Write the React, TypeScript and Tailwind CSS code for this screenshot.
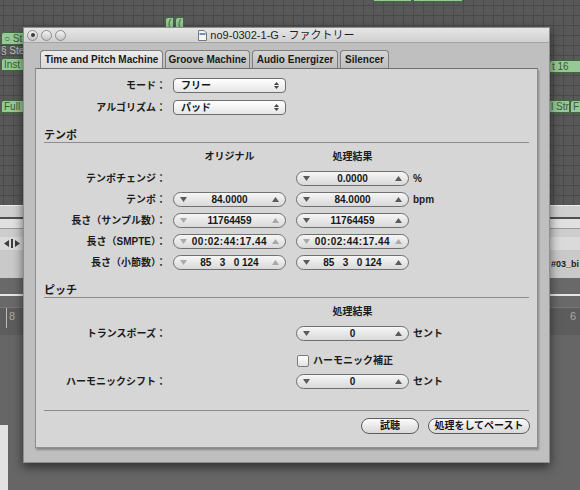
// App.tsx
// Time and Pitch Machine dialog (Logic "Factory" window) over the arrange area
import React from 'react'

const font = "font-['Liberation_Sans','Noto_Sans_CJK_JP',sans-serif]"

function Tri({ up, color }: { up?: boolean; color: string }) {
  return (
    <svg width="7" height="5" viewBox="0 0 7 5" className="shrink-0">
      <path d={up ? 'M0 5h7L3.5 0z' : 'M0 0h7L3.5 5z'} fill={color} />
    </svg>
  )
}

function Stepper({ value, dim, wide }: { value: string; dim?: boolean; wide?: boolean }) {
  const c = dim ? '#a9a9a9' : '#5a5a5a'
  return (
    <div className="w-[113px] h-[15px] shrink-0 rounded-full border border-[#707070] bg-linear-to-b from-[#f6f6f6] to-[#d9d9d9] flex items-center px-[6px]">
      <Tri color={c} />
      <span
        className={
          'flex-1 text-center text-[10px] font-bold leading-none text-[#161616] whitespace-pre ' +
          (wide ? 'tracking-[0.5px]' : '')
        }
      >
        {value}
      </span>
      <Tri up color={c} />
    </div>
  )
}

function Popup({ value }: { value: string }) {
  return (
    <div className="w-[113px] h-[15px] shrink-0 rounded-[4px] border border-[#6e6e6e] bg-linear-to-b from-[#ffffff] to-[#e6e6e6] flex items-center pl-[7px] pr-[6px]">
      <span className="flex-1 text-[10px] font-bold leading-none text-[#161616]">{value}</span>
      <div className="flex flex-col gap-[1px]">
        <svg width="5" height="3" viewBox="0 0 5 3"><path d="M0 3h5L2.5 0z" fill="#444" /></svg>
        <svg width="5" height="3" viewBox="0 0 5 3"><path d="M0 0h5L2.5 3z" fill="#444" /></svg>
      </div>
    </div>
  )
}

function Label({ children }: { children: React.ReactNode }) {
  return (
    <div className="w-[130px] shrink-0 text-right text-[10px] font-bold leading-none text-[#1c1c1c]">
      {children}
    </div>
  )
}

function Row({ label, left, right, unit }: { label: string; left?: React.ReactNode; right?: React.ReactNode; unit?: string }) {
  return (
    <div className="h-[21px] flex items-center">
      <Label>{label}</Label>
      <div className="ml-[7px] w-[113px] shrink-0">{left}</div>
      <div className="ml-[10px] w-[113px] shrink-0">{right}</div>
      {unit && <span className="ml-[4px] text-[10px] font-bold leading-none text-[#1c1c1c]">{unit}</span>}
    </div>
  )
}

function Section({ title, className }: { title: string; className: string }) {
  return (
    <div className={'mx-[8px] h-[16px] border-b border-[#8c8c8c] text-[11px] font-bold leading-[16px] text-[#1c1c1c] ' + className}>
      {title}
    </div>
  )
}

function Region({ label, className }: { label: string; className: string }) {
  return (
    <div
      className={
        'absolute h-[13px] rounded-tl-[3px] border border-[#3c6a3c] bg-[#97c996] text-[10px] leading-[11px] text-[#3a5a3a] pl-[2px] overflow-hidden whitespace-nowrap ' +
        className
      }
    >
      {label}
    </div>
  )
}

function Tab({ label, active, w }: { label: string; active?: boolean; w: string }) {
  return (
    <div
      className={
        'h-[18px] rounded-t-[4px] border border-b-0 border-[#7f7f7f] flex items-center justify-center text-[10px] font-bold text-[#1a1a1a] ' +
        w +
        (active ? ' bg-linear-to-b from-[#ececec] to-[#dadada]' : ' bg-linear-to-b from-[#d6d6d6] to-[#bdbdbd]')
      }
    >
      {label}
    </div>
  )
}

function Light({ dot }: { dot?: boolean }) {
  return (
    <div className="w-[11px] h-[11px] rounded-full border border-[#8d8d8d] bg-linear-to-b from-[#f4f4f4] to-[#c4c4c4] flex items-center justify-center">
      {dot && <div className="w-[4px] h-[4px] rounded-full bg-[#3a3a3a]" />}
    </div>
  )
}

export default function App() {
  return (
    <div className={'relative w-[580px] h-[490px] overflow-hidden bg-[#666666] ' + font}>
      {/* arrange area behind the window */}
      <div className="relative h-[205px] bg-[#585858] bg-[linear-gradient(to_right,#4a4a4a_1px,transparent_1px),linear-gradient(to_bottom,#4a4a4a_1px,transparent_1px)] bg-[size:10px_10px] bg-[position:3px_5px]">
        <Region label="○ St" className="left-[1px] top-[32px] w-[24px]" />
        <div className="absolute left-[1px] top-[46px] text-[10px] leading-none text-[#bdbdbd]">§ Stei</div>
        <Region label="Inst" className="left-[1px] top-[58px] w-[24px]" />
        <Region label="Full" className="left-[1px] top-[100px] w-[24px]" />
        <Region label="(" className="left-[165px] top-[17px] w-[9px]" />
        <Region label="(" className="left-[175px] top-[17px] w-[9px]" />
        <Region label="" className="left-[373px] -top-[11px] w-[39px]" />
        <Region label="" className="left-[413px] -top-[11px] w-[50px]" />
        <Region label="t 16" className="left-[549px] top-[60px] w-[34px]" />
        <Region label="l Str" className="left-[548px] top-[100px] w-[22px]" />
        <Region label="F" className="left-[570px] top-[100px] w-[14px]" />
      </div>
      <div className="h-[12px] bg-[#cfcfcf] border-t border-[#ededed]" />
      <div className="h-[2px] bg-[#4f4f4f]" />
      <div className="h-[9px] bg-[#e0e0e0]" />
      <div className="h-[9px] bg-[#cdcdcd] border-t border-[#9a9a9a]" />
      <div className="h-[13px] bg-[#dadada] flex items-center pl-[4px]">
        <svg width="16" height="9" viewBox="0 0 16 9">
          <path d="M0 4.5L5 1v7z M16 4.5L11 1v7z" fill="#3c3c3c" />
          <rect x="7" y="0" width="2" height="9" fill="#3c3c3c" />
        </svg>
      </div>
      <div className="h-[28px] bg-[#c9c9c9] flex justify-end items-center">
        <span className="w-[29px] whitespace-nowrap text-[9px] font-bold leading-none text-[#1c1c1c]">#03_bi</span>
      </div>
      <div className="h-[16px] bg-[#696969]" />
      <div className="h-[2px] bg-[#e6e6e6]" />
      <div className="h-[11px] bg-[#696969]" />
      <div className="h-[28px] bg-[#5d5d5d] border-t border-[#777] flex justify-between px-[4px] text-[11px] text-[#a9a9a9]">
        <span className="border-l border-[#bbb] pl-[2px] ml-[2px] h-[20px]">8</span>
        <span className="pl-[2px] h-[20px]">6</span>
      </div>
      <div className="flex">
        <div className="mt-[90px] w-[8px] h-[70px] bg-[#e2e2e2]" />
      </div>

      {/* Factory window */}
      <div className="absolute left-[23px] top-[27px] w-[527px] h-[436px] bg-[#bfbfbf] border border-[#8e8e8e] shadow-[0_4px_10px_rgba(0,0,0,0.55)] flex flex-col">
        <div className="h-[15px] shrink-0 bg-linear-to-b from-[#e6e6e6] to-[#d0d0d0] border-b border-[#a4a4a4] grid grid-cols-[1fr_auto_1fr] items-center px-[3px]">
          <div className="flex gap-[3px]">
            <Light dot />
            <Light />
            <Light />
          </div>
          <div className="flex items-center gap-[3px] text-[11px] leading-none text-[#1e1e1e] pr-[20px]">
            <svg width="9" height="11" viewBox="0 0 9 11">
              <path d="M0.5 0.5h5.5l2.5 2.5v7.5h-8z" fill="#f4f4f4" stroke="#777" />
              <rect x="1.5" y="3" width="6" height="2" fill="#6f8fc7" />
            </svg>
            <span>no9-0302-1-G - ファクトリー</span>
          </div>
          <div />
        </div>

        <div className="flex gap-[2px] ml-[16px] mt-[7px] shrink-0">
          <Tab label="Time and Pitch Machine" active w="w-[123px]" />
          <Tab label="Groove Machine" w="w-[85px]" />
          <Tab label="Audio Energizer" w="w-[86px]" />
          <Tab label="Silencer" w="w-[49px]" />
        </div>

        <div className="ml-[11px] w-[503px] h-[380px] bg-[#d6d6d6] border border-[#8f8f8f] border-t-[#6f6f6f] shadow-[1px_2px_2px_rgba(0,0,0,0.3)] flex flex-col">
          <div className="mt-[9px] h-[15px] flex items-center">
            <Label>モード：</Label>
            <div className="ml-[7px]"><Popup value="フリー" /></div>
          </div>
          <div className="mt-[7px] h-[15px] flex items-center">
            <Label>アルゴリズム：</Label>
            <div className="ml-[7px]"><Popup value="パッド" /></div>
          </div>

          <Section title="テンポ" className="mt-[12px]" />
          <div className="mt-[7px] h-[14px] flex items-center text-[10px] font-bold leading-none text-[#1c1c1c]">
            <div className="w-[130px]" />
            <div className="ml-[7px] w-[113px] text-center">オリジナル</div>
            <div className="ml-[10px] w-[113px] text-center">処理結果</div>
          </div>
          <div className="mt-[4px]">
            <Row label="テンポチェンジ：" right={<Stepper value="0.0000" />} unit="%" />
            <Row label="テンポ：" left={<Stepper value="84.0000" />} right={<Stepper value="84.0000" />} unit="bpm" />
            <Row label="長さ（サンプル数）：" left={<Stepper value="11764459" dim />} right={<Stepper value="11764459" />} />
            <Row label="長さ（SMPTE）：" left={<Stepper value="00:02:44:17.44" dim wide />} right={<Stepper value="00:02:44:17.44" dim wide />} />
            <Row label="長さ（小節数）：" left={<Stepper value="85   3   0 124" dim />} right={<Stepper value="85   3   0 124" />} />
          </div>

          <Section title="ピッチ" className="mt-[9px]" />
          <div className="mt-[7px] h-[14px] flex items-center text-[10px] font-bold leading-none text-[#1c1c1c]">
            <div className="w-[130px]" />
            <div className="ml-[7px] w-[113px]" />
            <div className="ml-[10px] w-[113px] text-center">処理結果</div>
          </div>
          <div className="mt-[4px]">
            <Row label="トランスポーズ：" right={<Stepper value="0" />} unit="セント" />
          </div>
          <div className="mt-[6px] h-[21px] flex items-center">
            <div className="ml-[261px] flex items-center gap-[4px]">
              <div className="w-[12px] h-[12px] rounded-[2px] border border-[#7d7d7d] bg-linear-to-b from-[#ffffff] to-[#e2e2e2]" />
              <span className="text-[10px] font-bold leading-none text-[#1c1c1c]">ハーモニック補正</span>
            </div>
          </div>
          <Row label="ハーモニックシフト：" right={<Stepper value="0" />} unit="セント" />

          <div className="mx-[8px] mt-[18px] border-t border-[#8c8c8c]" />
          <div className="mt-[7px] mr-[7px] flex justify-end gap-[9px]">
            <button className="w-[58px] h-[16px] rounded-full border border-[#5d5d5d] bg-linear-to-b from-[#fbfbfb] to-[#d8d8d8] text-[10px] font-bold leading-none text-[#161616]">
              試聴
            </button>
            <button className="w-[102px] h-[16px] rounded-full border border-[#5d5d5d] bg-linear-to-b from-[#fbfbfb] to-[#d8d8d8] text-[10px] font-bold leading-none text-[#161616]">
              処理をしてペースト
            </button>
          </div>
        </div>
      </div>
    </div>
  )
}
